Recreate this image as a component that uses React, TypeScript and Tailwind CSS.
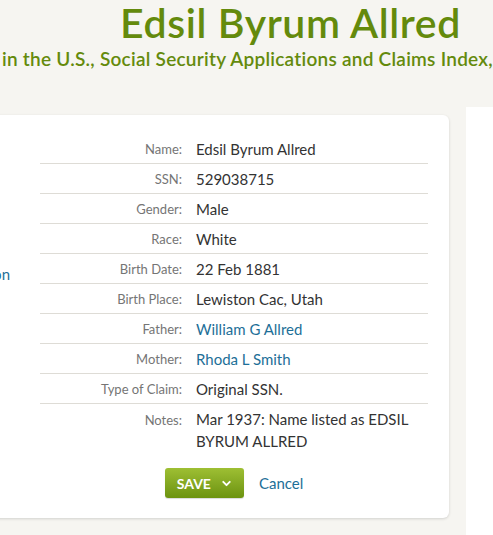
import React from 'react';
import { ChevronDown } from 'lucide-react';

interface Field {
  label: string;
  value: string;
  link?: boolean;
}

const fields: Field[] = [
  { label: 'Name:', value: 'Edsil Byrum Allred' },
  { label: 'SSN:', value: '529038715' },
  { label: 'Gender:', value: 'Male' },
  { label: 'Race:', value: 'White' },
  { label: 'Birth Date:', value: '22 Feb 1881' },
  { label: 'Birth Place:', value: 'Lewiston Cac, Utah' },
  { label: 'Father:', value: 'William G Allred', link: true },
  { label: 'Mother:', value: 'Rhoda L Smith', link: true },
  { label: 'Type of Claim:', value: 'Original SSN.' },
];

function Row({ field }: { field: Field }) {
  return (
    <div className="flex items-center h-[30px] border-b border-[#dedcd6]">
      <div className="w-[142px] shrink-0 text-right text-[13px] leading-[22px] text-[#757575]">
        {field.label}
      </div>
      <div
        className={
          field.link
            ? 'pl-[14px] text-[15px] leading-[22px] text-[#1d6f98]'
            : 'pl-[14px] text-[15px] leading-[22px] text-[#333333]'
        }
      >
        {field.value}
      </div>
    </div>
  );
}

export default function App() {
  return (
    <div className="w-[493px] h-[535px] overflow-hidden bg-[#f6f5f1] font-['Lato',sans-serif]">
      {/* Header */}
      <div className="whitespace-nowrap">
        <h1 className="pl-[120px] text-[41px] leading-[46px] tracking-[0.6px] font-semibold text-[#648a0c]">
          Edsil Byrum Allred
        </h1>
        <p className="pl-[2px] text-[19px] leading-[25px] tracking-[0.25px] font-semibold text-[#648a0c]">
          in the U.S., Social Security Applications and Claims Index,
        </p>
      </div>

      <div className="flex items-start mt-[36px]">
        {/* Record card */}
        <div className="-ml-[60px] w-[509px] shrink-0 mt-[8px] bg-white rounded-[6px] shadow-[0_1px_3px_rgba(0,0,0,0.15)] flex pt-[19px] pb-[20px]">
          <div className="w-[100px] shrink-0 pr-[30px] flex justify-end">
            <div className="mt-[129px] whitespace-nowrap text-[15px] leading-[22px] text-[#1d6f98]">
              Suggested person
            </div>
          </div>

          <div className="w-[388px] shrink-0">
            {fields.map((f) => (
              <Row key={f.label} field={f} />
            ))}
            <div className="flex items-baseline pt-[4px]">
              <div className="w-[142px] shrink-0 text-right text-[13px] leading-[22px] text-[#757575]">
                Notes:
              </div>
              <div className="pl-[14px] text-[15px] leading-[22px] text-[#333333]">
                Mar 1937: Name listed as EDSIL BYRUM ALLRED
              </div>
            </div>

            <div className="flex items-center justify-center gap-[15px] mt-[16px]">
              <button className="h-[30px] pl-[12px] pr-[11px] rounded-[3px] bg-linear-to-b from-[#9ebf33] to-[#6c930e] text-white font-bold text-[14px] flex items-center gap-[9px] shadow-[0_1px_1px_rgba(0,0,0,0.15)]">
                SAVE
                <ChevronDown size={13} strokeWidth={3.5} />
              </button>
              <a className="text-[15px] text-[#1d6f98]">Cancel</a>
            </div>
          </div>
        </div>

        <div className="w-[17px] shrink-0" />
        {/* Right column */}
        <div className="flex-1 h-[500px] bg-white" />
      </div>
    </div>
  );
}
